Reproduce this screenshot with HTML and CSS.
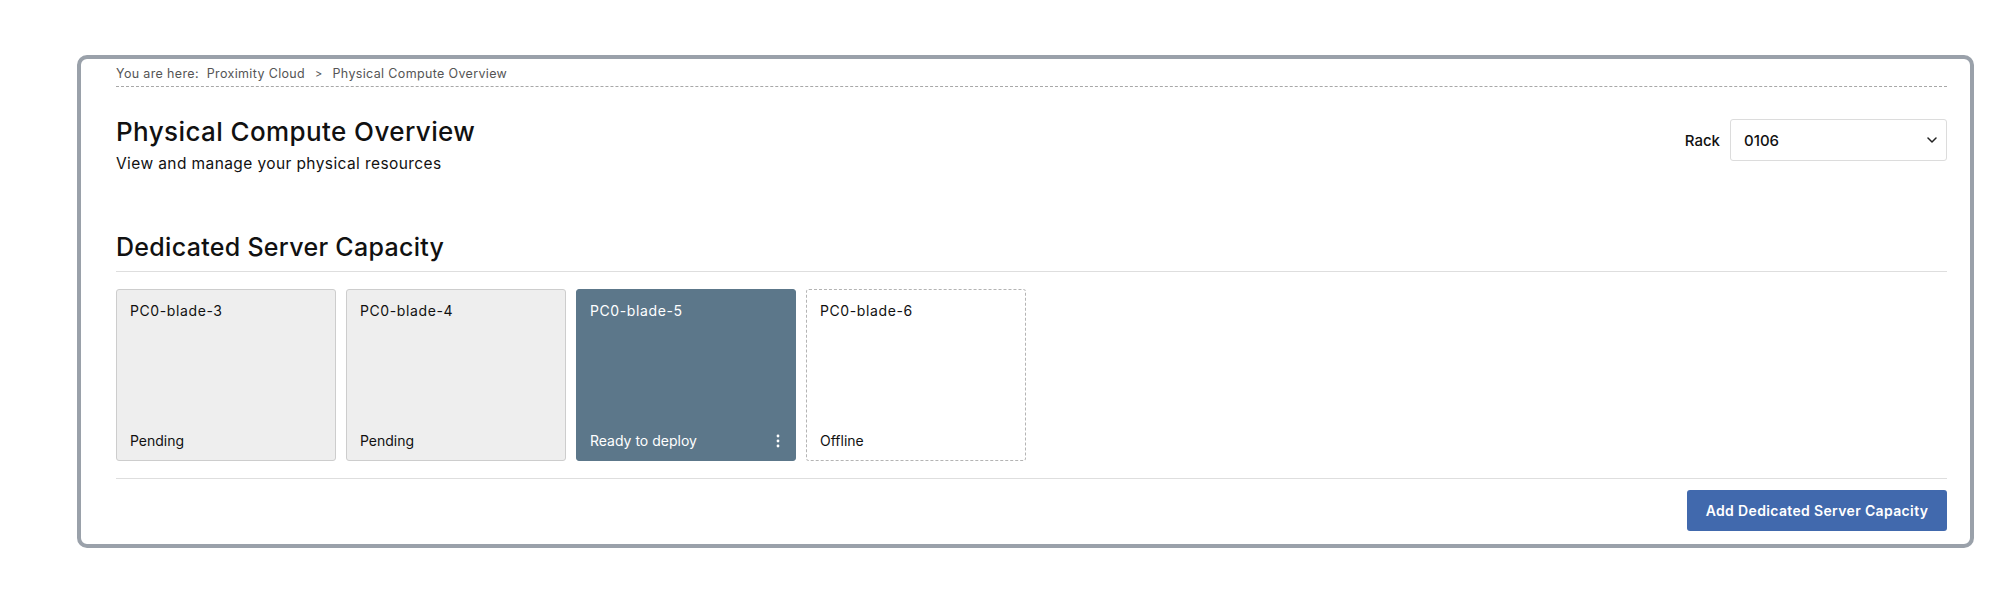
FILE: index.html
```html
<!DOCTYPE html>
<html lang="en">
<head>
    <meta charset="UTF-8">
    <meta name="viewport" content="width=device-width, initial-scale=1.0">
    <title>Physical Compute Overview | Proximity Cloud</title>
    <link rel="stylesheet" href="styles.css">
</head>
<body>
    <div class="frame">
        <nav class="breadcrumb">
            <span class="crumb-label">You are here:</span>
            <a href="#">Proximity Cloud</a>
            <span class="crumb-sep">&gt;</span>
            <span>Physical Compute Overview</span>
        </nav>

        <header class="page-header">
            <div>
                <h1>Physical Compute Overview</h1>
                <p class="subtitle">View and manage your physical resources</p>
            </div>
            <div class="rack-picker">
                <label for="rack">Rack</label>
                <div class="select-wrap">
                    <select id="rack" class="select">
                        <option>0106</option>
                        <option>0107</option>
                    </select>
                    <svg class="chevron" width="10" height="6" viewBox="0 0 10 6">
                        <path d="M1 1l4 4 4-4" fill="none" stroke="#222" stroke-width="1.5" stroke-linecap="round" stroke-linejoin="round"/>
                    </svg>
                </div>
            </div>
        </header>

        <section class="capacity">
            <h2>Dedicated Server Capacity</h2>

            <div class="blades">
                <div class="blade blade-pending">
                    <div class="blade-name">PC0-blade-3</div>
                    <div class="blade-status">Pending</div>
                </div>
                <div class="blade blade-pending">
                    <div class="blade-name">PC0-blade-4</div>
                    <div class="blade-status">Pending</div>
                </div>
                <div class="blade blade-ready">
                    <div class="blade-name">PC0-blade-5</div>
                    <div class="blade-foot">
                        <span class="blade-status">Ready to deploy</span>
                        <button class="kebab" aria-label="More actions">
                            <svg width="4" height="14" viewBox="0 0 4 14">
                                <circle cx="2" cy="2" r="1.4" fill="#fff"/>
                                <circle cx="2" cy="7" r="1.4" fill="#fff"/>
                                <circle cx="2" cy="12" r="1.4" fill="#fff"/>
                            </svg>
                        </button>
                    </div>
                </div>
                <div class="blade blade-offline">
                    <div class="blade-name">PC0-blade-6</div>
                    <div class="blade-status">Offline</div>
                </div>
            </div>

            <div class="actions">
                <button class="primary-button">Add Dedicated Server Capacity</button>
            </div>
        </section>
    </div>
</body>
</html>
```

FILE: styles.css
```css
body {
    font-family: 'Inter', 'Open Sans', sans-serif;
    background-color: #fff;
    color: #111;
    margin: 0;
}

.frame {
    box-sizing: border-box;
    width: 1897px;
    margin: 55px 0 0 77px;
    border: 4px solid #9aa1aa;
    border-radius: 10px;
    padding: 0 23px 13px 35px;
}

.breadcrumb {
    padding: 6px 0 3px;
    border-bottom: 1px dashed #a8a8a8;
    font-size: 12.5px;
    line-height: 18px;
    letter-spacing: 0.35px;
    color: #555;
}

.breadcrumb a {
    color: #555;
    text-decoration: none;
    margin-left: 4px;
}

.crumb-sep {
    margin: 0 6px;
    font-size: 11px;
}

.page-header {
    display: flex;
    justify-content: space-between;
    align-items: flex-start;
    padding-top: 29px;
}

h1 {
    margin: 0;
    font-size: 26px;
    line-height: 32px;
    font-weight: 500;
    letter-spacing: 0.4px;
}

.subtitle {
    margin: 5px 0 0;
    font-size: 15.5px;
    line-height: 22px;
    letter-spacing: 0.4px;
}

.rack-picker {
    display: flex;
    align-items: center;
    gap: 10px;
    margin-top: 3px;
}

.rack-picker label {
    font-size: 15px;
    font-weight: 500;
}

.select-wrap {
    position: relative;
}

.select {
    appearance: none;
    -webkit-appearance: none;
    box-sizing: border-box;
    width: 217px;
    height: 42px;
    padding: 0 30px 0 13px;
    border: 1px solid #dcdcdc;
    border-radius: 3px;
    background: #fff;
    font-family: inherit;
    font-size: 15px;
    font-weight: 500;
    color: #111;
}

.chevron {
    position: absolute;
    right: 10px;
    top: 18px;
    pointer-events: none;
}

.capacity h2 {
    margin: 56px 0 0;
    padding-bottom: 8px;
    border-bottom: 1px solid #dedede;
    font-size: 25px;
    line-height: 32px;
    font-weight: 500;
    letter-spacing: 0.3px;
}

.blades {
    display: flex;
    gap: 10px;
    padding: 17px 0;
    border-bottom: 1px solid #dedede;
}

.blade {
    box-sizing: border-box;
    width: 220px;
    height: 172px;
    padding: 11px 13px 9px;
    border-radius: 3px;
    display: flex;
    flex-direction: column;
    justify-content: space-between;
    font-size: 14px;
    line-height: 20px;
}

.blade-name {
    letter-spacing: 0.6px;
}

.blade-pending {
    background-color: #eeeeee;
    border: 1px solid #cdcdcd;
}

.blade-ready {
    background-color: #5c778a;
    border: 1px solid #5c778a;
    color: #fff;
}

.blade-offline {
    background-color: #fff;
    border: 1px dashed #b4b4b4;
}

.blade-foot {
    display: flex;
    justify-content: space-between;
    align-items: center;
}

.kebab {
    display: flex;
    padding: 0 4px;
    margin-right: -2px;
    border: none;
    background: none;
    cursor: pointer;
}

.actions {
    display: flex;
    justify-content: flex-end;
    padding-top: 11px;
}

.primary-button {
    width: 260px;
    height: 41px;
    border: none;
    border-radius: 3px;
    background-color: #4169ad;
    color: #fff;
    font-family: inherit;
    font-size: 14px;
    font-weight: 600;
    letter-spacing: 0.35px;
    cursor: pointer;
}
```
